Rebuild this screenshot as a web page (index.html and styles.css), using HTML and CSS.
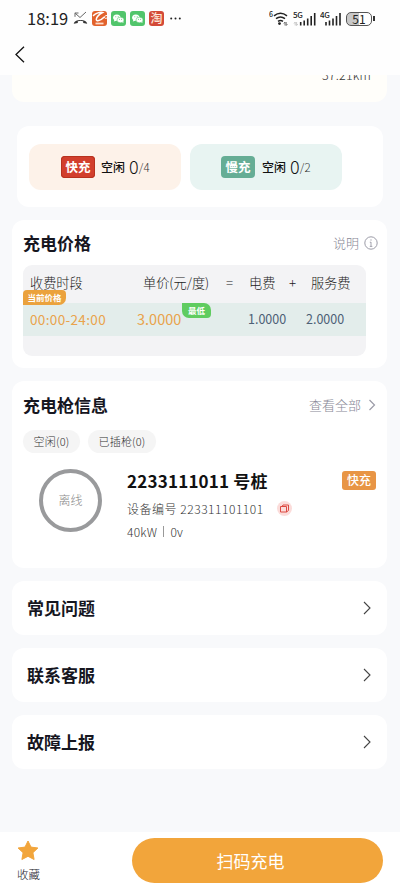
FILE: index.html
```html
<!DOCTYPE html>
<html lang="zh-CN">
<head>
<meta charset="utf-8">
<title>充电站详情</title>
<link rel="stylesheet" href="styles.css">
</head>
<body>
<header class="top">
  <div class="status">
    <span class="time">18:19</span>
    <svg class="ic" width="15" height="15" viewBox="0 0 15 15" fill="none"><path d="M2 1.800v4M2 2h3.500M2.500 2.500l4.500 4 6-5.500" stroke="#555" stroke-width=".9"/><path d="M.8 12.800C1 7.600 14 7.600 14.200 12.800l-4-.8v-1.800q-2.700-.8-5.400 0V12z" fill="#333"/></svg>
    <svg class="ic" width="15" height="15" viewBox="0 0 15 15"><rect width="15" height="15" rx="3" fill="#e2622c"/><path d="M1 4.800C4 2.500 8 1 10.500 1.500 7 3.500 4.500 6 4.300 8.300c-.2 2.300 4 1.700 8-2.300" fill="none" stroke="#fff" stroke-width="1.500"/><path d="M15 4.500c-2 0-3 1.200-2.500 2.200.3.800 1.500.8 2.500.3" fill="none" stroke="#fff"/><path d="M3.500 12.500h8" stroke="#ffdcc9" stroke-width="1.800"/></svg>
    <svg class="ic" width="15" height="15" viewBox="0 0 15 15"><rect width="15" height="15" rx="3" fill="#51c56b"/><path d="M2.800 10.500l.5-1.500a3.800 3.200 0 1 1 2 .8z" fill="#fff"/><ellipse cx="9.500" cy="9" rx="3.500" ry="2.800" fill="#fff" stroke="#51c56b" stroke-width=".5"/><path d="M11 11l1.500 1-.3-1.800" fill="#fff"/><g fill="#51c56b"><circle cx="4.800" cy="5.700" r=".5"/><circle cx="7.200" cy="5.700" r=".5"/><circle cx="8.500" cy="8.300" r=".5"/><circle cx="10.600" cy="8.300" r=".5"/></g></svg>
    <svg class="ic" width="15" height="15" viewBox="0 0 15 15"><rect width="15" height="15" rx="3" fill="#51c56b"/><path d="M2.800 10.500l.5-1.500a3.800 3.200 0 1 1 2 .8z" fill="#fff"/><ellipse cx="9.500" cy="9" rx="3.500" ry="2.800" fill="#fff" stroke="#51c56b" stroke-width=".5"/><path d="M11 11l1.500 1-.3-1.800" fill="#fff"/><g fill="#51c56b"><circle cx="4.800" cy="5.700" r=".5"/><circle cx="7.200" cy="5.700" r=".5"/><circle cx="8.500" cy="8.300" r=".5"/><circle cx="10.600" cy="8.300" r=".5"/></g></svg>
    <span class="tao">淘</span>
    <svg class="dots" width="12" height="15" viewBox="0 0 12 15"><g fill="#222"><circle cx="1.200" cy="7.500" r="1"/><circle cx="5.500" cy="7.500" r="1"/><circle cx="9.800" cy="7.500" r="1"/></g></svg>
    <svg class="wifi" width="20" height="17" viewBox="0 0 20 17" fill="none"><path d="M5 5.800q6.500-5 13 0M7 8.700q4.500-3.500 9 0" stroke="#222" stroke-width="1.500"/><path d="M9 11.400q2.500-1.800 5 0" stroke="#222" stroke-width="1.400"/><circle cx="10.500" cy="13.600" r="1.400" fill="#222"/><path d="M14.800 13.500l1.200-1.500v3.500M17.200 12v3.500l1.300-1.500" stroke="#666" stroke-width=".9"/><text x="0" y="7.300" class="net6">6</text></svg>
    <svg class="sig" width="24" height="17" viewBox="0 0 24 17"><text x="0" y="8" class="net">5G</text><path d="M1 13.500L2.200 12v3.500M3.600 12v3.500L4.800 14" stroke="#bbb" fill="none" stroke-width=".8"/><path d="M7.700 12v3.500M11.200 10.500v5M14.700 8.500v7M18.200 6v9.500M21.700 3v12.500" stroke="#222" stroke-width="1.600"/></svg>
    <svg class="sig sig2" width="22" height="17" viewBox="0 0 22 17"><text x="0" y="8" class="net">4G</text><path d="M6 12v3.500M9.500 10.500v5M13 8.500v7M16.500 6v9.500M20 3v12.500" stroke="#222" stroke-width="1.600"/></svg>
    <div class="bat"><span>51</span></div><i class="cap"></i>
  </div>
  <div class="nav"><svg width="12" height="18" viewBox="0 0 12 18" fill="none"><path d="M10 1.800L2 9.500l8 7.700" stroke="#111" stroke-width="1.300"/></svg></div>
</header>
<main>
  <section class="distance"><span>37.21km</span></section>
  <section class="modes">
    <div class="mode fast"><b>快充</b><strong>空闲</strong><span class="n">0</span><span class="d">/4</span></div>
    <div class="mode slow"><b>慢充</b><strong>空闲</strong><span class="n">0</span><span class="d">/2</span></div>
  </section>
  <section class="card price">
    <div class="head"><h2>充电价格</h2><span class="more">说明</span><svg width="14" height="14" viewBox="0 0 14 14" fill="none" stroke="#9b9ba7"><circle cx="7" cy="7" r="6.200"/><path d="M7 6v4.500M7 3.300v1.400M5.800 6.200H7M5.800 10.400h2.500" stroke-width=".9"/></svg></div>
    <div class="table">
      <div class="row labels"><span>收费时段</span><span>单价(元/度)</span><span>=</span><span>电费</span><span>+</span><span>服务费</span></div>
      <div class="row values"><span class="hours">00:00-24:00</span><span class="unit">3.0000</span><span class="fee">1.0000</span><span class="fee">2.0000</span><i class="now">当前价格</i><i class="low">最低</i></div>
    </div>
  </section>
  <section class="card guns">
    <div class="head"><h2>充电枪信息</h2><span class="more">查看全部</span><svg width="8" height="12" viewBox="0 0 8 12" fill="none"><path d="M1.500 1l5 5-5 5" stroke="#9b9ba7" stroke-width="1.200"/></svg></div>
    <div class="chips"><span>空闲(0)</span><span>已插枪(0)</span></div>
    <div class="gun">
      <div class="ring">离线</div>
      <div class="info">
        <h3>2233111011 号桩</h3>
        <p class="dev"><span>设备编号 223311101101</span><svg width="15" height="15" viewBox="0 0 15 15" fill="none"><circle cx="7.500" cy="7.500" r="7.500" fill="#fbdcda"/><path d="M3.500 5.500h6v5.500h-6zM5 5.500L6 4h5.500v5.500l-2 1.500" stroke="#dc4a42" stroke-width="1" stroke-linejoin="round"/></svg></p>
        <p class="power">40kW<i></i>0v</p>
      </div>
      <span class="tag">快充</span>
    </div>
  </section>
  <section class="card link"><h2>常见问题</h2><svg width="8" height="14" viewBox="0 0 8 14" fill="none"><path d="M1 1l6 6-6 6" stroke="#444" stroke-width="1.100"/></svg></section>
  <section class="card link"><h2>联系客服</h2><svg width="8" height="14" viewBox="0 0 8 14" fill="none"><path d="M1 1l6 6-6 6" stroke="#444" stroke-width="1.100"/></svg></section>
  <section class="card link"><h2>故障上报</h2><svg width="8" height="14" viewBox="0 0 8 14" fill="none"><path d="M1 1l6 6-6 6" stroke="#444" stroke-width="1.100"/></svg></section>
</main>
<footer>
  <div class="fav"><svg width="22" height="21" viewBox="0 0 22 21"><path d="M11 1l3 6.100 6.900.9-5 4.700 1.200 6.800L11 16.300l-6.100 3.200 1.200-6.800L1.100 8 8 7.100z" fill="#f2a53b" stroke="#f2a53b" stroke-width="1" stroke-linejoin="round"/></svg><span>收藏</span></div>
  <button>扫码充电</button>
</footer>
</body>
</html>
```
FILE: styles.css
```css
* { box-sizing: border-box; margin: 0; padding: 0; }
body { width: 400px; height: 889px; overflow: hidden; display: flex; flex-direction: column; background: #f8f9fb; color: #16161f; font-family: "Noto Sans CJK SC", sans-serif; }
svg { display: block; flex: none; }
i { font-style: normal; }
.top { height: 75px; flex: none; background: #fefefe; }
.status { height: 37px; padding: 0 0 0 27px; display: flex; align-items: center; }
.time { width: 46px; margin-top: -1px; font-size: 16.500px; line-height: 20px; color: #222; white-space: nowrap; }
.ic { margin-right: 4px; }
.tao { width: 15px; height: 15px; border-radius: 3px; background: #d34a38; color: #ffe9dc; font-size: 12px; line-height: 14px; text-align: center; font-weight: 500; }
.dots { margin-left: 6px; }
.wifi { margin-left: 87px; }
.net { font: 500 8px "Noto Sans CJK SC", sans-serif; letter-spacing: -.4px; fill: #222; }
.net6 { font: 500 7px "Noto Sans CJK SC", sans-serif; fill: #222; }
.sig { margin-left: 4px; }
.sig2 { margin-left: 3px; }
.bat { width: 26px; height: 14px; margin-left: 4px; border: 1px solid #555; border-radius: 5px; background: linear-gradient(90deg, #c8c8c8 52%, #fff 52%); color: #222; font-size: 12px; line-height: 11px; text-align: center; }
.cap { width: 1.500px; height: 5px; margin-left: 1px; background: #333; }
.nav { padding: 8px 0 0 14px; }
main { flex: 1; min-height: 0; overflow: hidden; padding: 0 13px 0 12px; }
.distance { height: 27px; overflow: hidden; border-radius: 0 0 12px 12px; background: #fffefa; text-align: right; padding-right: 16px; font-size: 12.500px; line-height: 18px; font-weight: 300; letter-spacing: .2px; color: #333; }
.distance span { display: block; margin-top: -9px; }
.modes { height: 81px; margin: 24px 4px 13px 5px; padding: 18px 12px 17px; display: flex; gap: 9px; border-radius: 12px; background: #fff; }
.mode { width: 152px; border-radius: 12px; display: flex; align-items: center; padding-left: 32px; color: #111; white-space: nowrap; }
.fast { background: #fdf2e9; }
.slow { background: #e8f4f2; padding-left: 31px; }
.mode b { width: 34px; height: 22px; margin-right: 6px; border-radius: 4px; color: #fff; font-size: 12.500px; line-height: 22px; text-align: center; }
.slow b { margin-right: 7px; }
.fast b { background: #d23f2d; box-shadow: inset 0 0 0 1px #b7321f; }
.slow b { background: #65ad95; }
.mode strong { font-size: 12px; font-weight: 500; line-height: 20px; }
.mode .n { margin: -2px 0 0 4px; font-size: 18px; line-height: 22px; font-weight: 300; }
.mode .d { font-size: 11.500px; line-height: 20px; color: #333; font-weight: 300; letter-spacing: .2px; }
.card { border-radius: 12px; background: #fff; }
.head { display: flex; align-items: center; height: 24px; }
h2 { font-size: 17px; line-height: 24px; font-weight: 700; margin-top: -1px; }
.more { margin-left: auto; font-size: 13px; line-height: 20px; font-weight: 300; color: #878795; }
.price { height: 148px; margin-bottom: 13px; padding: 11px 9px 0 11px; }
.price .head { gap: 5px; }
.table { width: 343px; height: 91px; margin-top: 10px; border-radius: 9px; overflow: hidden; background: #f3f3f5; }
.row { display: grid; align-items: center; white-space: nowrap; }
.labels { height: 38px; padding: 0 0 2px 7px; grid-template-columns: 113px 83px 23px 40px 22px 50px; font-size: 13.200px; line-height: 18px; font-weight: 300; color: #222; }
.values { position: relative; height: 33px; padding: 0 0 2px 7px; grid-template-columns: 107px 111px 58px 60px; background: #e3edeb; }
.hours { font-size: 13.500px; letter-spacing: .35px; color: #e9a34c; }
.unit { font-size: 14.500px; color: #e9a34c; }
.fee { font-size: 12.500px; color: #4d6076; }
.now, .low { position: absolute; color: #fff; font-size: 8.500px; font-weight: 700; line-height: 14px; text-align: center; }
.now { left: 0; top: -13px; width: 43px; height: 15px; border-radius: 4px 4px 7px 0; background: #eba23d; }
.low { left: 159px; top: 0; width: 29px; height: 15px; border-radius: 0 7px 4px 7px; background: #60cc60; }
.guns { height: 187px; margin-bottom: 13px; padding: 12px 11px 0; }
.guns .head { gap: 7px; }
.chips { display: flex; gap: 8px; margin-top: 13px; }
.chips span { width: 57px; height: 23px; border-radius: 12px; background: #f5f5f5; font-size: 11px; line-height: 22px; text-align: center; font-weight: 300; color: #333; letter-spacing: .2px; }
.chips span + span { width: 68px; }
.gun { display: flex; padding: 16px 0 0 16px; }
.ring { width: 63px; height: 63px; border: 4px solid #999a9c; border-radius: 50%; color: #888; font-size: 12px; line-height: 54px; text-align: center; font-weight: 300; }
.info { margin-left: 25px; white-space: nowrap; }
h3 { height: 29px; margin-top: -1px; font-size: 17px; line-height: 25px; font-weight: 700; letter-spacing: .2px; color: #111; }
.info p { height: 23px; font-size: 12px; line-height: 23px; font-weight: 300; color: #333; display: flex; align-items: center; }
.dev span { width: 150px; letter-spacing: .53px; }
.power { letter-spacing: .25px; }
.power i { width: 1px; height: 11px; margin: 0 6px; background: #999; }
.tag { margin: 2px 0 0 auto; width: 34px; height: 19px; border-radius: 3px; background: #e89545; color: #fff; font-size: 12px; line-height: 18px; text-align: center; font-weight: 500; }
.link { height: 54px; margin-bottom: 13px; padding: 0 16px 0 15px; display: flex; justify-content: space-between; align-items: center; }
footer { height: 57px; flex: none; background: #fff; display: flex; padding: 6px 17px 0; }
.fav { width: 22px; white-space: nowrap; font-size: 11.500px; line-height: 18px; font-weight: 300; }
.fav svg { margin-top: 2px; }
.fav span { display: block; margin-top: 4px; }
footer button { margin-left: 93px; width: 251px; height: 45px; padding: 0 14px 1px 0; border: 0; border-radius: 23px; background: #f2a53b; color: #fff; font: 17px "Noto Sans CJK SC", sans-serif; }
```
